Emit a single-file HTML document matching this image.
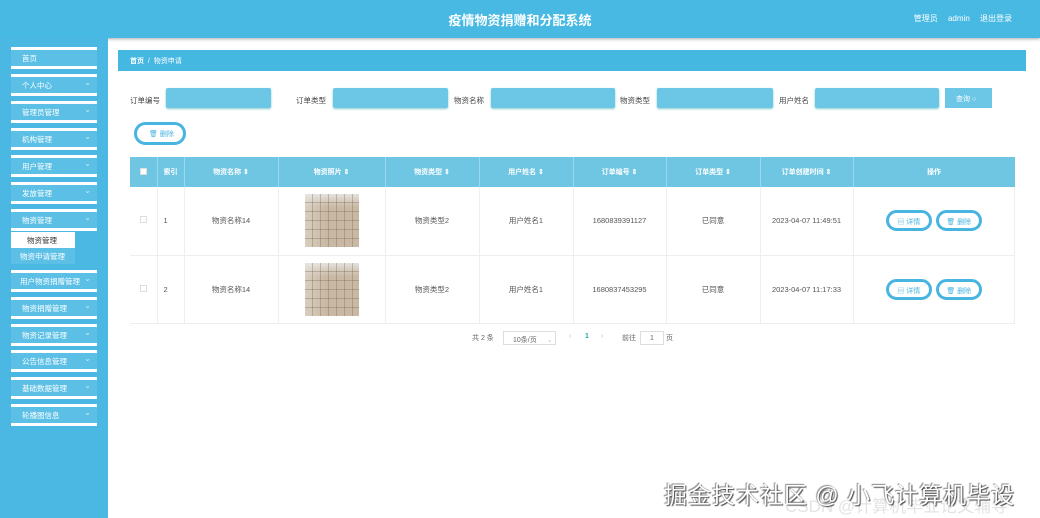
<!DOCTYPE html>
<html><head><meta charset="utf-8"><style>
*{margin:0;padding:0;box-sizing:border-box}
body{width:1040px;height:518px;overflow:hidden;background:#fff;font-family:"Liberation Sans","Noto Sans CJK SC",sans-serif;font-size:8px;color:#555;position:relative}
.hd{position:absolute;left:0;top:0;width:1040px;height:38px;background:#47b9e3;box-shadow:0 1px 3px #aaa}
.hd .t{position:absolute;left:0;width:1040px;top:10px;text-align:center;color:#fff;font-size:13px;font-weight:bold}
.hd .r{position:absolute;right:28px;top:13px;color:#fff;font-size:8px;word-spacing:8px}
.sb{position:absolute;left:0;top:38px;width:108px;height:480px;background:#4bb8e4}
.mi{position:absolute;left:11px;width:86px;height:22px;border-top:3px solid #fff;border-bottom:3px solid #fff;background:#5cc0e6;color:#fff;font-size:7.5px;padding:3px 0 0 11px}
.mi:after{content:"⌄";position:absolute;right:6px;top:1px;color:#cdeaf6;font-size:8px}
.mi.n:after{content:""}
.sub{position:absolute;left:11px;width:64px;height:16px;font-size:7.5px;padding:3px 0 0 16px}
.bc{position:absolute;left:118px;top:50px;width:908px;height:21px;background:#45b8e2;color:#fff;font-size:7px;padding:6px 0 0 12px}
.lb{position:absolute;top:95px;font-size:7.5px;color:#444}
.in{position:absolute;top:88px;height:20px;background:#6cc6e6;border-radius:2px;box-shadow:0 1px 2px #8cc}
.btn{position:absolute;left:945px;top:88px;width:47px;height:20px;background:#6cc6e6;color:#fff;font-size:7px;padding:6px 0 0 11px}
.del{position:absolute;left:134px;top:122px;width:52px;height:23px;border:3px solid #48b4e0;border-radius:12px;color:#48b4e0;font-size:7px;padding:4px 0 0 12px}
table{position:absolute;left:130px;top:157px;width:885px;border-collapse:collapse}
th{background:#6ec6e3;color:#fff;height:30px;font-size:7px;border-right:1px solid #9ad8ee;font-weight:bold}
td{height:68px;text-align:center;font-size:7.5px;color:#555;border-right:1px solid #eee;border-bottom:1px solid #eee}
.cb{display:inline-block;width:7px;height:7px;border:1px solid #ddd;background:#fff}
.img{display:inline-block;width:54px;height:53px;background:#c9b9a4;position:relative;vertical-align:middle}
.img:before{content:"";position:absolute;inset:0;background:repeating-linear-gradient(90deg,transparent 0 7px,rgba(120,100,80,.35) 7px 8px),repeating-linear-gradient(0deg,transparent 0 8px,rgba(120,100,80,.35) 8px 9px),linear-gradient(180deg,rgba(235,235,235,.8) 0,transparent 25%),linear-gradient(90deg,rgba(255,255,255,.3),transparent 40%)}
.ob{display:inline-block;width:46px;height:21px;border:3px solid #48b4e0;border-radius:11px;color:#48b4e0;font-size:7px;padding-top:4px;margin:0 2px}
.pg{position:absolute;top:333px;font-size:7px;color:#666}
.wm{position:absolute;left:664px;top:476px;font-size:23px;color:#fff;text-shadow:1px 1px 1px #444,-1px -1px 1px #888;letter-spacing:1px}
.wm2{position:absolute;left:785px;top:492px;font-size:17px;color:rgba(200,200,200,.5)}
</style></head><body>
<div class="hd"><div class="t">疫情物资捐赠和分配系统</div><div class="r">管理员 admin 退出登录</div></div>
<div class="sb">
<div class="mi n" style="top:9px">首页</div>
<div class="mi" style="top:36px">个人中心</div>
<div class="mi" style="top:63px">管理员管理</div>
<div class="mi" style="top:90px">机构管理</div>
<div class="mi" style="top:117px">用户管理</div>
<div class="mi" style="top:144px">发放管理</div>
<div class="mi" style="top:171px">物资管理</div>
<div class="sub" style="top:194px;background:#fff;color:#333">物资管理</div>
<div class="sub" style="top:210px;background:#5cc0e6;color:#fff;padding-left:9px">物资申请管理</div>
<div class="mi" style="top:232px;padding-left:9px">用户物资捐赠管理</div>
<div class="mi" style="top:259px">物资捐赠管理</div>
<div class="mi" style="top:286px">物资记录管理</div>
<div class="mi" style="top:312px">公告信息管理</div>
<div class="mi" style="top:339px">基础数据管理</div>
<div class="mi" style="top:366px">轮播图信息</div>
</div>
<div class="bc"><b>首页</b> &nbsp;/&nbsp; 物资申请</div>
<div class="lb" style="left:130px">订单编号</div><div class="in" style="left:166px;width:105px"></div>
<div class="lb" style="left:296px">订单类型</div><div class="in" style="left:333px;width:115px"></div>
<div class="lb" style="left:454px">物资名称</div><div class="in" style="left:491px;width:124px"></div>
<div class="lb" style="left:620px">物资类型</div><div class="in" style="left:657px;width:116px"></div>
<div class="lb" style="left:779px">用户姓名</div><div class="in" style="left:815px;width:124px"></div>
<div class="btn">查询 ○</div>
<div class="del">🗑 删除</div>
<table>
<tr><th style="width:27px"><span class="cb"></span></th><th style="width:27px">索引</th><th style="width:94px">物资名称 ⇕</th><th style="width:107px">物资照片 ⇕</th><th style="width:94px">物资类型 ⇕</th><th style="width:94px">用户姓名 ⇕</th><th style="width:93px">订单编号 ⇕</th><th style="width:94px">订单类型 ⇕</th><th style="width:93px">订单创建时间 ⇕</th><th style="border:none">操作</th></tr>
<tr><td><span class="cb"></span></td><td style="text-align:left;padding-left:6px">1</td><td>物资名称14</td><td><span class="img"></span></td><td>物资类型2</td><td>用户姓名1</td><td>1680839391127</td><td>已同意</td><td>2023-04-07 11:49:51</td><td><span class="ob">▤ 详情</span><span class="ob">🗑 删除</span></td></tr>
<tr><td><span class="cb"></span></td><td style="text-align:left;padding-left:6px">2</td><td>物资名称14</td><td><span class="img"></span></td><td>物资类型2</td><td>用户姓名1</td><td>1680837453295</td><td>已同意</td><td>2023-04-07 11:17:33</td><td><span class="ob">▤ 详情</span><span class="ob">🗑 删除</span></td></tr>
</table>
<div class="pg" style="left:472px">共 2 条</div>
<div class="pg" style="left:503px;top:331px;width:53px;height:14px;border:1px solid #ddd;padding:3px 0 0 9px">10条/页 <span style="color:#bbb;margin-left:8px">⌄</span></div>
<div class="pg" style="left:569px;color:#bbb">‹</div>
<div class="pg" style="left:585px;color:#2aa;font-weight:bold">1</div>
<div class="pg" style="left:601px;color:#bbb">›</div>
<div class="pg" style="left:622px">前往</div>
<div class="pg" style="left:640px;top:331px;width:24px;height:14px;border:1px solid #ddd;text-align:center;padding-top:3px">1</div>
<div class="pg" style="left:666px">页</div>
<div class="wm2">CSDN @计算机毕业论文辅导</div>
<div class="wm">掘金技术社区 @ 小飞计算机毕设</div>
</body></html>
